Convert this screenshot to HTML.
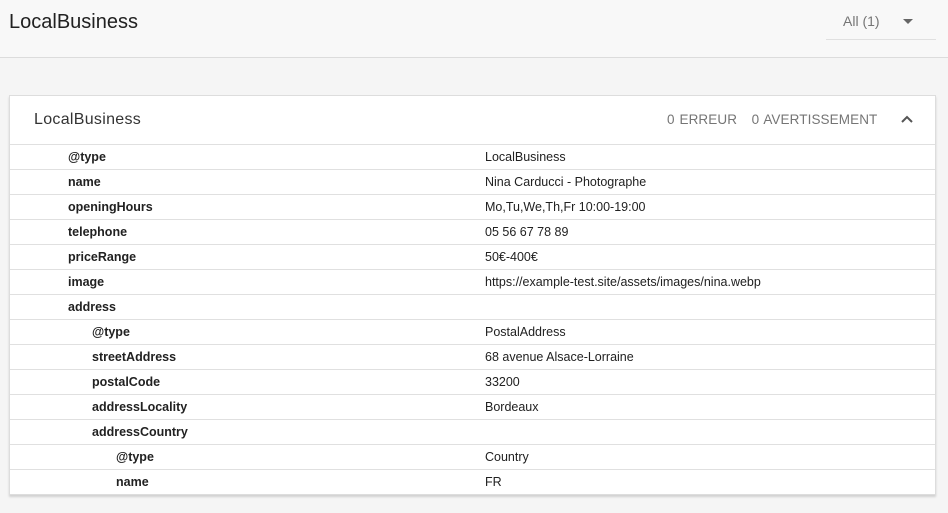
<!DOCTYPE html>
<html><head><meta charset="utf-8"><style>
*{margin:0;padding:0;box-sizing:border-box}
body{width:948px;height:513px;background:#f5f5f5;font-family:"Liberation Sans",sans-serif;position:relative;overflow:hidden;color:#212121}
.top{position:absolute;left:0;top:0;width:948px;height:58px;background:#f8f8f8;border-bottom:1px solid #dcdcdc}
.title{position:absolute;left:9px;top:11px;font-size:20px;color:#212121}
.sel{position:absolute;left:826px;top:0;width:110px;height:40px;border-bottom:1px solid #e0e0e0}
.sel span{position:absolute;left:17px;top:13px;font-size:14px;color:#757575}
.sel i{position:absolute;left:77px;top:19px;width:0;height:0;border-left:5px solid transparent;border-right:5px solid transparent;border-top:5px solid #666}
.card{position:absolute;left:9px;top:95px;width:927px;height:400px;background:#fff;border:1px solid #ddd;box-shadow:0 2px 2px rgba(0,0,0,.15)}
.hd{height:49px;border-bottom:1px solid #e0e0e0;position:relative}
.hd .t{position:absolute;left:24px;top:15px;font-size:16px;color:#333;letter-spacing:.3px}
.hd .c{position:absolute;left:657px;top:16px;font-size:13.5px;color:#757575;letter-spacing:.1px;word-spacing:1px}
.hd svg{position:absolute;left:890px;top:18px}
.row{height:25px;border-bottom:1px solid #e0e0e0;position:relative;font-size:12.5px}
.row:last-child{border-bottom:none}
.row b{position:absolute;top:5px;font-weight:bold;color:#212121}
.row span{position:absolute;left:475px;top:5px;color:#212121}
</style></head><body>
<div class="top"><div class="title">LocalBusiness</div>
<div class="sel"><span>All (1)</span><i></i></div></div>
<div class="card">
<div class="hd"><div class="t">LocalBusiness</div><div class="c">0 ERREUR &nbsp;&nbsp;0 AVERTISSEMENT</div>
<svg width="14" height="10" viewBox="0 0 14 10"><path d="M2 8 L7 3 L12 8" fill="none" stroke="#555" stroke-width="2"/></svg></div>
<div class="row"><b style="left:58px">@type</b><span>LocalBusiness</span></div>
<div class="row"><b style="left:58px">name</b><span>Nina Carducci - Photographe</span></div>
<div class="row"><b style="left:58px">openingHours</b><span>Mo,Tu,We,Th,Fr 10:00-19:00</span></div>
<div class="row"><b style="left:58px">telephone</b><span>05 56 67 78 89</span></div>
<div class="row"><b style="left:58px">priceRange</b><span>50€-400€</span></div>
<div class="row"><b style="left:58px">image</b><span>https://example-test.site/assets/images/nina.webp</span></div>
<div class="row"><b style="left:58px">address</b></div>
<div class="row"><b style="left:82px">@type</b><span>PostalAddress</span></div>
<div class="row"><b style="left:82px">streetAddress</b><span>68 avenue Alsace-Lorraine</span></div>
<div class="row"><b style="left:82px">postalCode</b><span>33200</span></div>
<div class="row"><b style="left:82px">addressLocality</b><span>Bordeaux</span></div>
<div class="row"><b style="left:82px">addressCountry</b></div>
<div class="row"><b style="left:106px">@type</b><span>Country</span></div>
<div class="row"><b style="left:106px">name</b><span>FR</span></div>
</div>
</body></html>
